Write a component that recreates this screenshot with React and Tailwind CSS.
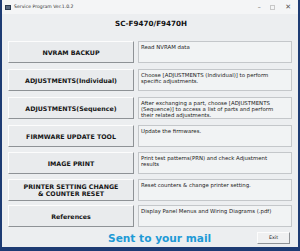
import React from "react";

const rows = [
  { label: ["NVRAM BACKUP"], desc: "Read NVRAM data" },
  { label: ["ADJUSTMENTS(Individual)"], desc: "Choose [ADJUSTMENTS (Individual)] to perform specific adjustments." },
  { label: ["ADJUSTMENTS(Sequence)"], desc: "After exchanging a part, choose [ADJUSTMENTS (Sequence)] to access a list of parts and perform their related adjustments." },
  { label: ["FIRMWARE UPDATE TOOL"], desc: "Update the firmwares." },
  { label: ["IMAGE PRINT"], desc: "Print test patterns(PRN) and check Adjustment results" },
  { label: ["PRINTER SETTING CHANGE", "& COUNTER RESET"], desc: "Reset counters & change printer setting." },
  { label: ["References"], desc: "Display Panel Menus and Wiring Diagrams (.pdf)" },
];

const tops = ["mt-[12px]", "mt-[6px]", "mt-[6px]", "mt-[6px]", "mt-[5px]", "mt-[5px]", "mt-[4px]"];

export default function App() {
  return (
    <div className="w-[300px] h-[251px] bg-[#1d3b73] pl-[2px] pr-[2px] pb-[4px] overflow-hidden" style={{ fontFamily: '"DejaVu Sans", Verdana, sans-serif' }}>
      <div className="w-full h-full bg-[#eceef0] flex flex-col">
        {/* title bar */}
        <div className="h-[14px] bg-[#f4f5f6] flex items-center shrink-0">
          <div className="ml-[3px] w-[6px] h-[5px] bg-[#5a6a80] border border-[#2a3a50]" />
          <span className="ml-[3px] text-[4.6px] text-[#333] leading-none">Service Program Ver.1.0.2</span>
          <div className="ml-auto flex items-center text-[#555]">
            <span className="w-[14px] text-center text-[6px] leading-none">–</span>
            <span className="ml-[4px] w-[5px] h-[5px] border border-[#c8c8c8]" />
            <span className="ml-[10px] mr-[7px] text-[7px] leading-none">✕</span>
          </div>
        </div>
        {/* heading */}
        <div className="mt-[5px] h-[10px] flex items-center pl-[113px] text-[7.2px] font-bold text-[#111] leading-none">SC-F9470/F9470H</div>
        {/* rows */}
        <div className="flex flex-col pl-[6px] pr-[6px]">
          {rows.map((r, i) => (
            <div key={i} className={`flex h-[22px] ${tops[i]}`}>
              <div className="w-[126px] h-full bg-[#e9ebed] border border-t-[#fcfcfc] border-l-[#fcfcfc] border-r-[#8e9296] border-b-[#8e9296] flex flex-col items-center justify-center text-[6.3px] font-bold text-[#151515] leading-[7px]">
                {r.label.map((l, j) => (
                  <span key={j}>{l}</span>
                ))}
              </div>
              <div className="ml-[4px] flex-1 h-full bg-[#f1f3f4] border border-[#c4c7ca] pl-[2px] pt-[2px] pr-[12px] text-[5.4px] leading-[6px] text-[#222]">
                {r.desc}
              </div>
            </div>
          ))}
        </div>
        {/* footer */}
        <div className="flex items-center mt-[5px] pl-[106px] pr-[8px]">
          <span className="text-[10.6px] font-bold text-[#1e9ad6] leading-none">Sent to your mail</span>
          <div className="ml-auto w-[33px] h-[12px] bg-[#eff0f1] border border-t-[#fcfcfc] border-l-[#fcfcfc] border-r-[#8e9296] border-b-[#8e9296] flex items-center justify-center text-[4.8px] text-[#222]">Exit</div>
        </div>
      </div>
    </div>
  );
}
